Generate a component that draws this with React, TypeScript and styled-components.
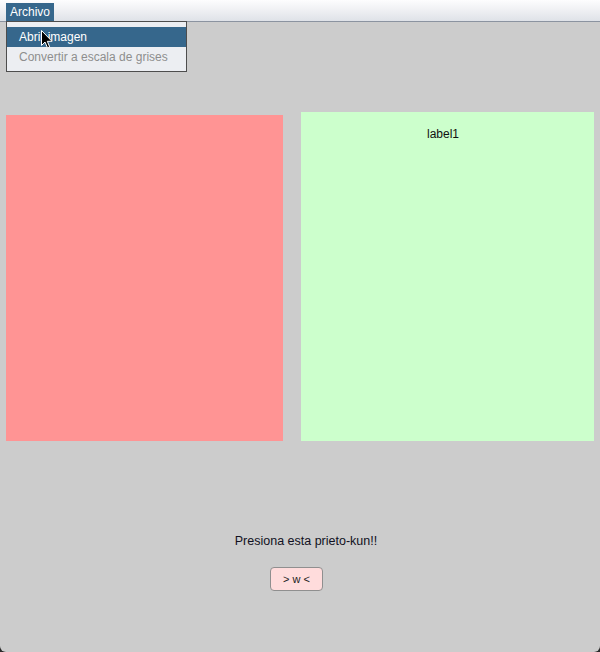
import React from 'react'
import styled, { createGlobalStyle } from 'styled-components'

const GlobalStyle = createGlobalStyle`
  html, body {
    margin: 0;
    padding: 0;
    background: #2b2b2b;
  }
  body {
    font-family: "Liberation Sans", Arial, sans-serif;
    font-size: 12px;
  }
`

const App: React.FC = () => (
  <>
    <GlobalStyle />
    <Window>
      <MenuBar>
        <MenuTitle $open>Archivo</MenuTitle>
        <Dropdown>
          <MenuItem $active>Abrir imagen</MenuItem>
          <MenuItem $disabled>Convertir a escala de grises</MenuItem>
        </Dropdown>
        <Cursor width="12" height="19" viewBox="0 0 12 19">
          <path
            d="M0.5 0.5 L0.5 15.5 L4 12 L6.5 17.8 L8.7 16.9 L6.3 11.3 L11 11.3 Z"
            fill="#000"
            stroke="#fff"
            strokeWidth="1"
          />
        </Cursor>
      </MenuBar>
      <Panels>
        <ImagePanel />
        <ResultPanel>
          <PanelLabel>label1</PanelLabel>
        </ResultPanel>
      </Panels>
      <Footer>
        <Prompt>Presiona esta prieto-kun!!</Prompt>
        <ActionButton>&gt; w &lt;</ActionButton>
      </Footer>
    </Window>
  </>
)

const Window = styled.div`
  position: relative;
  width: 600px;
  height: 652px;
  background: #cccccc;
  border-radius: 0 0 6px 6px;
  overflow: hidden;
  display: flex;
  flex-direction: column;
`

const MenuBar = styled.div`
  position: relative;
  height: 21px;
  padding-left: 6px;
  display: flex;
  align-items: flex-end;
  background: linear-gradient(#fdfdfe 0%, #f0f1f4 45%, #dfe2e8 100%);
  border-bottom: 1px solid #8b93a0;
`

const MenuTitle = styled.div<{ $open?: boolean }>`
  height: 18px;
  padding: 0 4px;
  line-height: 18px;
  color: ${(p) => (p.$open ? '#ffffff' : '#000000')};
  background: ${(p) => (p.$open ? '#36678c' : 'transparent')};
`

const Dropdown = styled.div`
  position: absolute;
  left: 6px;
  top: 21px;
  width: 179px;
  padding: 5px 0 4px;
  background: #eceef2;
  border: 1px solid #4d4d4d;
  z-index: 2;
`

const MenuItem = styled.div<{ $active?: boolean; $disabled?: boolean }>`
  height: 20px;
  line-height: 20px;
  padding-left: 12px;
  color: ${(p) => (p.$active ? '#ffffff' : p.$disabled ? '#8e8e8e' : '#000')};
  background: ${(p) => (p.$active ? '#36678c' : 'transparent')};
  white-space: nowrap;
`

const Cursor = styled.svg`
  position: absolute;
  left: 41px;
  top: 30px;
  z-index: 3;
`

const Panels = styled.div`
  display: flex;
  align-items: flex-end;
  margin-top: 90px;
  padding-left: 6px;
  gap: 18px;
`

const ImagePanel = styled.div`
  width: 277px;
  height: 326px;
  background: #ff9494;
`

const ResultPanel = styled.div`
  width: 293px;
  height: 329px;
  background: #ccffcc;
  display: flex;
  justify-content: center;
  padding-right: 9px;
  box-sizing: border-box;
`

const PanelLabel = styled.div`
  margin-top: 15px;
  height: 14px;
  line-height: 14px;
  color: #111;
`

const Footer = styled.div`
  display: flex;
  flex-direction: column;
  align-items: center;
  margin-top: 93px;
`

const Prompt = styled.div`
  margin-left: 12px;
  font-size: 12.5px;
  line-height: 14px;
  color: #111122;
`

const ActionButton = styled.button`
  margin-top: 19px;
  margin-left: -7px;
  width: 53px;
  height: 24px;
  padding: 0;
  font-family: "Liberation Sans", Arial, sans-serif;
  font-size: 11px;
  color: #222;
  background: #ffdcdc;
  border: 1px solid #8f8f8f;
  border-radius: 4px;
`

export default App
